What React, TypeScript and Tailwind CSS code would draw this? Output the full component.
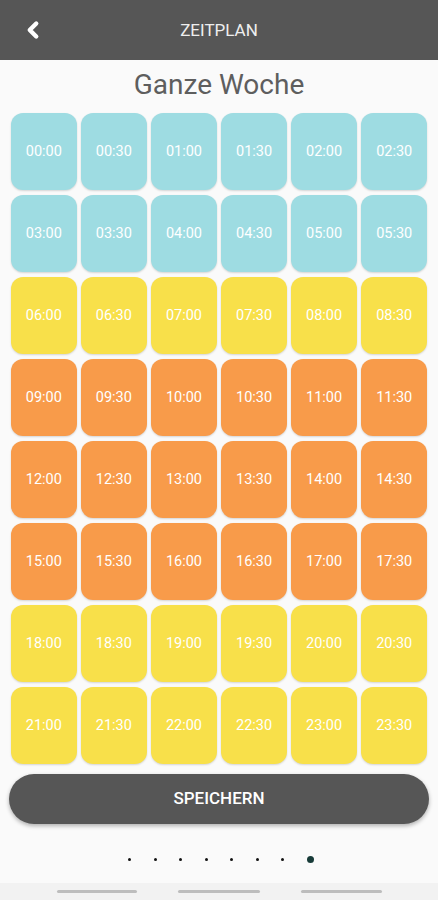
import { ChevronLeft } from "lucide-react";

const slots: { t: string; c: string }[] = [];
for (let h = 0; h < 24; h++) {
  for (const m of ["00", "30"]) {
    const t = `${String(h).padStart(2, "0")}:${m}`;
    let c = "bg-[#f8e04a]";
    if (h < 6) c = "bg-[#9edce2]";
    else if (h >= 9 && h < 18) c = "bg-[#f89b4a]";
    slots.push({ t, c });
  }
}

export default function App() {
  return (
    <div
      className="w-[438px] h-[900px] bg-[#fafafa] flex flex-col overflow-hidden"
      style={{ fontFamily: "Roboto, 'Noto Sans', sans-serif" }}
    >
      {/* Header */}
      <div className="h-[60px] bg-[#565656] flex items-center relative shrink-0">
        <ChevronLeft className="absolute left-[20px] text-white" size={26} strokeWidth={4} />
        <div className="flex-1 text-center text-[17px] text-[#eeeeee] pt-[2px]">ZEITPLAN</div>
      </div>

      <div className="text-center text-[28px] text-[#5e5e5e] mt-[7px] leading-[36px]">Ganze Woche</div>

      {/* Grid */}
      <div className="grid grid-cols-6 gap-x-[4.5px] gap-y-[5px] px-[11px] mt-[10px]">
        {slots.map((s) => (
          <div
            key={s.t}
            className={`${s.c} h-[77px] rounded-[12px] flex items-center justify-center text-white text-[14.5px] shadow-[0_1px_2px_rgba(0,0,0,0.15)]`}
          >
            {s.t}
          </div>
        ))}
      </div>

      {/* Save */}
      <div className="px-[9px] mt-[10px]">
        <button className="w-full h-[50px] rounded-full bg-[#565656] text-white text-[17px] font-medium shadow-[0_2px_4px_rgba(0,0,0,0.3)]">
          SPEICHERN
        </button>
      </div>

      {/* Dots */}
      <div className="flex items-center justify-center gap-[22.5px] mt-[31px] h-[8px] pl-[4px]">
        {Array.from({ length: 7 }).map((_, i) => (
          <div key={i} className="w-[3px] h-[3px] rounded-full bg-[#111111]" />
        ))}
        <div className="w-[7px] h-[7px] rounded-full bg-[#173b38]" />
      </div>

      {/* System nav */}
      <div className="mt-auto h-[17px] bg-[#f2f2f2] flex items-center justify-center gap-[41px]">
        <div className="w-[80px] h-[3px] rounded-full bg-[#bdbdbd]" />
        <div className="w-[82px] h-[3px] rounded-full bg-[#bdbdbd]" />
        <div className="w-[81px] h-[3px] rounded-full bg-[#bdbdbd]" />
      </div>
    </div>
  );
}
